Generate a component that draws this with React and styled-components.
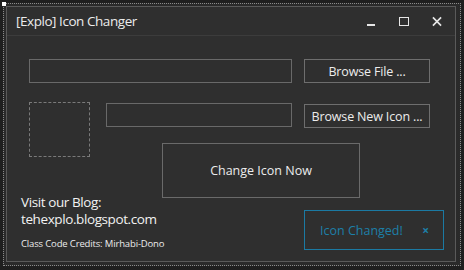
import React from "react";
import styled, { createGlobalStyle } from "styled-components";

const GlobalStyle = createGlobalStyle`
  html, body {
    margin: 0;
    padding: 0;
    background: #1f1f1f;
    font-family: "Open Sans", "Noto Sans", sans-serif;
  }
  * { box-sizing: border-box; }
`;

const App = () => {
  return (
    <>
      <GlobalStyle />
      <Page>
        <Frame>
          <Handle />
          <Window>
            <TitleBar>
              <Title>[Explo] Icon Changer</Title>
              <Controls>
                <ControlButton aria-label="minimize">
                  <svg width="10" height="10" viewBox="0 0 10 10">
                    <rect x="1" y="7" width="8" height="2" fill="#e6e6e6" />
                  </svg>
                </ControlButton>
                <ControlButton aria-label="maximize">
                  <svg width="10" height="10" viewBox="0 0 10 10">
                    <rect x="0.5" y="0.5" width="9" height="8" fill="none" stroke="#e6e6e6" />
                  </svg>
                </ControlButton>
                <ControlButton aria-label="close">
                  <svg width="11" height="11" viewBox="0 0 11 11">
                    <path d="M1 1 L10 10 M10 1 L1 10" stroke="#e6e6e6" strokeWidth="1.8" />
                  </svg>
                </ControlButton>
              </Controls>
            </TitleBar>

            <Body>
              <Row>
                <TextBox width={263} />
                <Button>Browse File ...</Button>
              </Row>

              <IconRow>
                <IconPreview />
                <IconColumn>
                  <Row>
                    <TextBox width={186} $top={1} />
                    <Button $top={2}>Browse New Icon ...</Button>
                  </Row>
                  <BigButton>Change Icon Now</BigButton>
                </IconColumn>
              </IconRow>

              <Footer>
                <Info>
                  <Blog>
                    Visit our Blog:
                    <br />
                    tehexplo.blogspot.com
                  </Blog>
                  <Credits>Class Code Credits: Mirhabi-Dono</Credits>
                </Info>
                <Toast>
                  <span>Icon Changed!</span>
                  <ToastClose>×</ToastClose>
                </Toast>
              </Footer>
            </Body>
          </Window>
        </Frame>
      </Page>
    </>
  );
};

export default App;

const Page = styled.div`
  width: 464px;
  height: 270px;
  padding: 3px 3px 4px 3px;
`;

const Frame = styled.div`
  position: relative;
  width: 458px;
  height: 263px;
  border: 1px dotted #8a8a8a;
  background: #2a2a2a;
  padding: 2px 4px 3px 2px;
`;

const Handle = styled.div`
  position: absolute;
  top: -2px;
  left: -2px;
  width: 4px;
  height: 4px;
  background: #ffffff;
`;

const Window = styled.div`
  width: 450px;
  height: 256px;
  border: 1px solid #5a5a5a;
  background: #2f2f2f;
  display: flex;
  flex-direction: column;
  overflow: hidden;
`;

const TitleBar = styled.div`
  height: 29px;
  flex-shrink: 0;
  border-bottom: 1px solid #3c3c3c;
  display: flex;
  align-items: center;
  justify-content: space-between;
  padding: 0 13px 0 9px;
`;

const Title = styled.div`
  color: #ececec;
  font-size: 13.5px;
  letter-spacing: -0.45px;
`;

const Controls = styled.div`
  display: flex;
  align-items: center;
  gap: 23px;
  margin-top: 1px;
`;

const ControlButton = styled.div`
  width: 10px;
  height: 11px;
  display: flex;
  align-items: center;
  justify-content: center;
`;

const Body = styled.div`
  padding: 23px 0 0 22px;
  display: flex;
  flex-direction: column;
`;

const Row = styled.div`
  display: flex;
  align-items: flex-start;
  gap: 12px;
`;

const TextBox = styled.div`
  width: ${(p) => p.width}px;
  height: 24px;
  margin-top: ${(p) => p.$top || 0}px;
  border: 1px solid #696969;
  background: #2f2f2f;
`;

const Button = styled.div`
  width: 126px;
  height: 24px;
  margin-top: ${(p) => p.$top || 0}px;
  border: 1px solid #6e6e6e;
  color: #ececec;
  font-size: 12.5px;
  letter-spacing: -0.15px;
  display: flex;
  align-items: center;
  justify-content: center;
  white-space: nowrap;
`;

const IconRow = styled.div`
  display: flex;
  align-items: flex-start;
  margin-top: 19px;
`;

const IconPreview = styled.div`
  width: 61px;
  height: 55px;
  border: 1px dashed #7a7a7a;
`;

const IconColumn = styled.div`
  margin-left: 16px;
  display: flex;
  flex-direction: column;
`;

const BigButton = styled.div`
  width: 198px;
  height: 55px;
  margin: 15px 0 0 56px;
  border: 1px solid #6a6a6a;
  color: #ececec;
  font-size: 12.5px;
  display: flex;
  align-items: center;
  justify-content: center;
`;

const Footer = styled.div`
  margin: -4px 0 0 -8px;
  padding-right: 11px;
  display: flex;
  justify-content: space-between;
  align-items: flex-start;
`;

const Info = styled.div`
  display: flex;
  flex-direction: column;
`;

const Blog = styled.div`
  color: #f2f2f2;
  font-size: 13.5px;
  line-height: 17px;
  letter-spacing: -0.4px;
`;

const Credits = styled.div`
  margin-top: 10px;
  color: #ececec;
  font-size: 9.5px;
  line-height: 12px;
  letter-spacing: -0.15px;
`;

const Toast = styled.div`
  margin-top: 16px;
  width: 140px;
  height: 40px;
  border: 1px solid #1b7aa3;
  color: #1d7fa8;
  font-size: 12.5px;
  display: flex;
  align-items: center;
  justify-content: space-between;
  padding: 0 14px 0 15px;
`;

const ToastClose = styled.span`
  font-weight: bold;
  font-size: 12px;
`;
